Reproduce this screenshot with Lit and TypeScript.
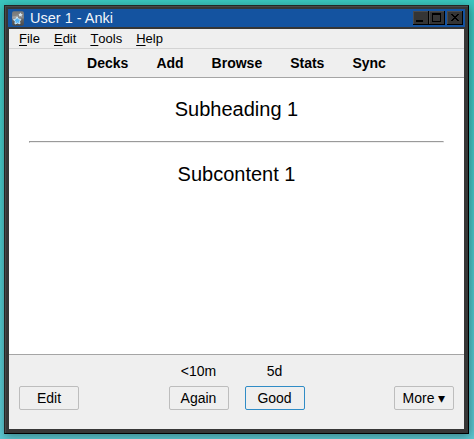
import { LitElement, html, css, svg } from "lit";
import { customElement, property } from "lit/decorators.js";

@customElement("anki-button")
class AnkiButton extends LitElement {
  @property() label = "";
  @property() due = "";
  @property({ type: Boolean, reflect: true }) primary = false;
  static styles = css`
    :host { display: flex; flex-direction: column; align-items: center; width: 60px; }
    .due { height: 16px; line-height: 16px; margin-bottom: 7px; }
    button { box-sizing: border-box; width: 60px; height: 24px; padding: 0; border: 1px solid #bdbdbd;
      border-radius: 2px; background: #efefef; color: #000; font: 14px/22px "Liberation Sans", Arial, sans-serif; white-space: nowrap; }
    :host([primary]) button { border-color: #308cc6; }
  `;
  render() {
    return html`<div class="due">${this.due}</div><button>${this.label}</button>`;
  }
}

@customElement("title-button")
class TitleButton extends LitElement {
  @property() kind = "min";
  static styles = css`
    :host { display: block; width: 16px; height: 14px; }
    svg { display: block; }
  `;
  render() {
    const glyph =
      this.kind === "min" ? svg`<path d="M3 9h7v2H3z" fill="#000"/>`
      : this.kind === "max" ? svg`<path d="M3 2h9v9H3zM4 4v6h7V4z" fill="#000" fill-rule="evenodd"/>`
      : svg`<path d="M4 3h2v1h1v1h2v-1h1v-1h2v1h-1v1h-1v1h-1v1h1v1h1v1h1v1h-2v-1h-1v-1h-2v1h-1v1h-2v-1h1v-1h1v-1h1v-1h-1v-1h-1v-1h-1z" fill="#000"/>`;
    return html`<svg width="16" height="14" shape-rendering="crispEdges">
      <rect width="16" height="14" fill="#000"/><rect width="15" height="13" fill="#4a4a4a"/>
      <rect x="1" y="1" width="14" height="12" fill="#353535"/>${glyph}</svg>`;
  }
}

@customElement("app-root")
class AppRoot extends LitElement {
  static styles = css`
    :host { display: block; box-sizing: border-box; width: 474px; height: 439px; padding: 5px 5px 5px 4px; overflow: hidden;
      background: linear-gradient(#3ac6bf, #5cc8d2); color: #000; font: 14px "Liberation Sans", Arial, sans-serif; }
    .window { box-sizing: border-box; width: 465px; height: 429px; border: 1px solid #000; border-top-color: #242424; border-left-color: #242424;
      background: #363636; box-shadow: inset 1px 1px #484848, 1px 2px 9px rgba(0,0,0,.38); padding: 3px; display: flex; flex-direction: column; }
    .titlebar { height: 18px; flex: none; background: #1453a0; display: flex; align-items: center; padding: 0 2px 0 4px; color: #fff; }
    .logo { width: 12px; height: 15px; margin-right: 6px; }
    .title { flex: 1; font-size: 14.5px; line-height: 18px; color: #f2f5fa; }
    .controls { display: flex; }
    .close { margin-left: 2px; }
    .body { margin: 2px 0 0 1px; width: 455px; height: 400px; display: flex; flex-direction: column; background: #efefef; }
    .menu { box-sizing: border-box; height: 20px; border-bottom: 1px solid #d3d3d3; display: flex; gap: 14px; padding-left: 10px; font-size: 13px; line-height: 19px; font-kerning: none; }
    .menu u { text-underline-offset: 2px; text-decoration-thickness: 1px; text-decoration-skip-ink: none; }
    .tools { box-sizing: border-box; height: 29px; border-bottom: 1px solid #a5a5a5; display: flex; justify-content: center; gap: 28px; font-weight: bold; line-height: 28px; }
    .card { flex: 1; background: #fff; padding: 20px 20px 0; text-align: center; font-size: 20px; line-height: 23px; }
    hr { height: 0; margin: 20px 0; border: 1px solid; border-color: #9a9a9a #eee #eee #9a9a9a; }
    .answer { box-sizing: border-box; height: 75px; border-top: 1px solid #a5a5a5; display: flex; justify-content: space-between; padding: 8px 10px 0; }
    .grades { display: flex; gap: 16px; }
  `;
  render() {
    return html`<div class="window">
      <div class="titlebar">
        <svg class="logo" viewBox="0 0 12 15">
          <defs><linearGradient id="g" x2="0" y2="1"><stop stop-color="#777"/><stop offset=".45" stop-color="#8a8a8a"/><stop offset=".55" stop-color="#666"/><stop offset="1" stop-color="#484848"/></linearGradient></defs>
          <rect x=".1" y=".2" width="11.8" height="14.6" rx="1.8" fill="url(#g)"/>
          <path d="M.2 5.5 6 4.5v2L.2 8.5z" fill="#bbb" opacity=".5"/>
          <path d="M5 5.9 6.4 8 8.9 8.3 7.6 10.3 8 12.8 5.5 12 3 13 3.2 10.4 1.4 8.6 4 8z" fill="#58b4f2" stroke="#d9f0ff" stroke-width=".9"/>
          <path d="M8.6 1.5 9.3 3 10.8 3.3 9.7 4.3 9.6 5.7 8.3 5 6.9 5.4 7.2 4 6.4 3 7.9 2.8z" fill="#d5e7f3"/>
        </svg>
        <div class="title">User 1 - Anki</div>
        <div class="controls"><title-button kind="min"></title-button><title-button kind="max"></title-button><title-button class="close" kind="close"></title-button></div>
      </div>
      <div class="body">
        <div class="menu">${["File", "Edit", "Tools", "Help"].map((m) => html`<span><u>${m[0]}</u>${m.slice(1)}</span>`)}</div>
        <div class="tools">${["Decks", "Add", "Browse", "Stats", "Sync"].map((t) => html`<span>${t}</span>`)}</div>
        <div class="card"><div>Subheading 1</div><hr /><div>Subcontent 1</div></div>
        <div class="answer">
          <anki-button label="Edit"></anki-button>
          <div class="grades"><anki-button label="Again" due="<10m"></anki-button><anki-button label="Good" due="5d" primary></anki-button></div>
          <anki-button label="More ▾"></anki-button>
        </div>
      </div>
    </div>`;
  }
}
